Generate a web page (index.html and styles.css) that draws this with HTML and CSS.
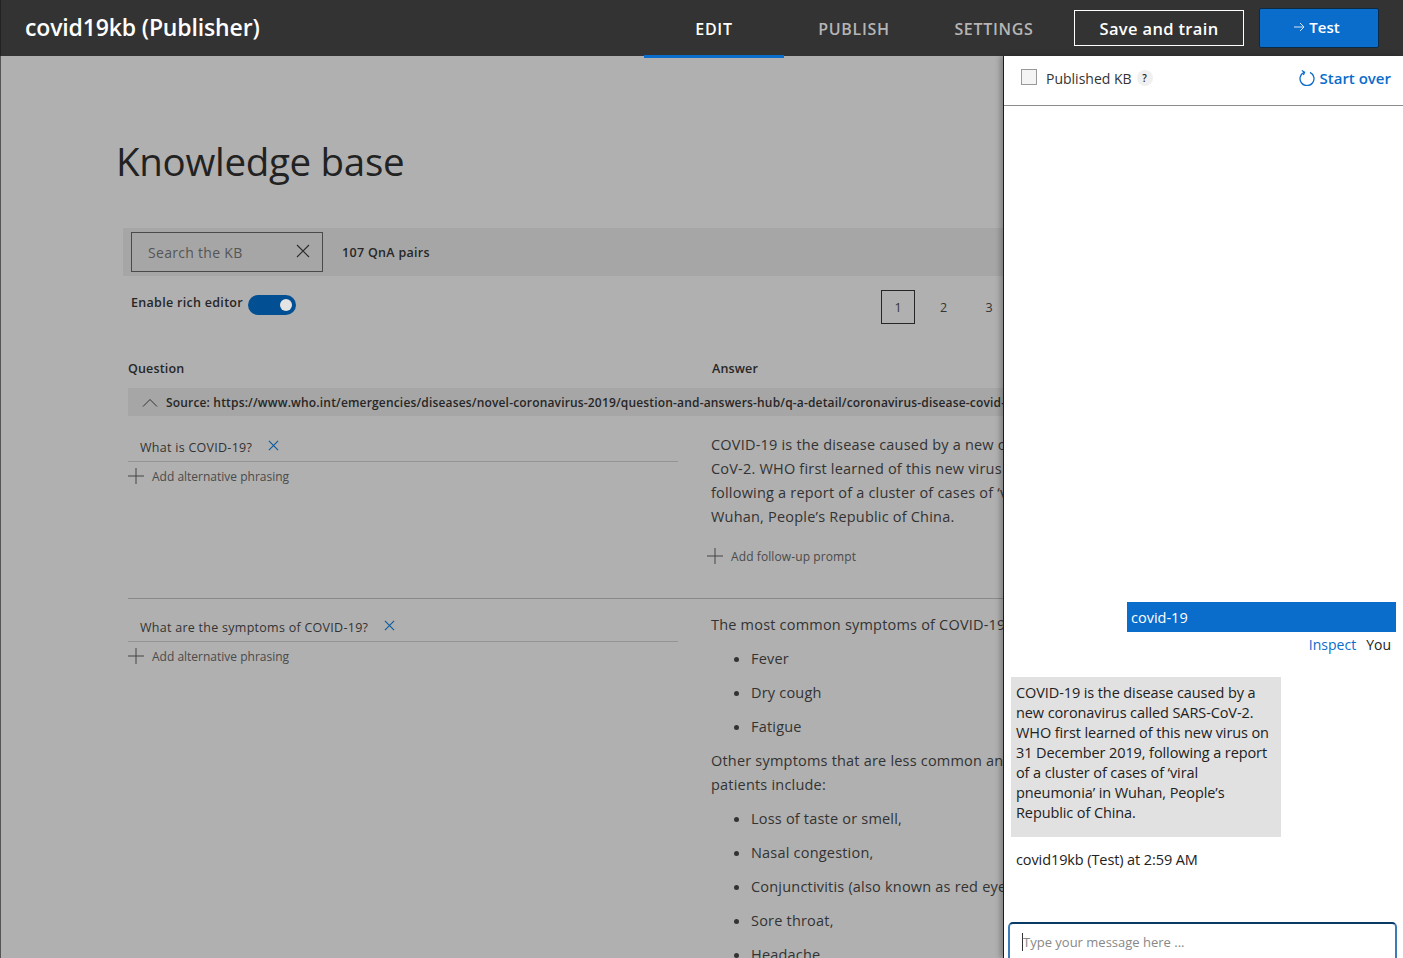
FILE: index.html
```html
<!DOCTYPE html>
<html lang="en">
<head>
	<meta charset="UTF-8">
	<title>covid19kb (Publisher)</title>
	<link rel="stylesheet" href="styles.css">
</head>
<body>
	<header class="topbar">
		<div class="brand">covid19kb (Publisher)</div>
		<nav class="tabs">
			<a class="tab tab-active">EDIT</a>
			<a class="tab">PUBLISH</a>
			<a class="tab">SETTINGS</a>
		</nav>
		<button class="btn-save">Save and train</button>
		<button class="btn-test">
			<svg class="arrow" viewBox="0 0 12 12"><path d="M1 6h10M7 2l4 4-4 4" fill="none" stroke="#d5e6f7" stroke-width="1"/></svg>
			Test
		</button>
	</header>
	<div class="page">
		<main class="kb">
			<h1 class="kb-title">Knowledge base</h1>
			<div class="toolbar">
				<div class="search">
					<span>Search the KB</span>
					<svg class="search-x" viewBox="0 0 14 14"><path d="M1 1l12 12M13 1L1 13" stroke="#2b2b2b" stroke-width="1.1"/></svg>
				</div>
				<span class="pair-count">107 QnA pairs</span>
			</div>
			<div class="editor-row">
				<div class="rich">
					<span>Enable rich editor</span>
					<span class="toggle"><i></i></span>
				</div>
				<div class="pager">
					<span class="page-num page-current">1</span>
					<span class="page-num">2</span>
					<span class="page-num">3</span>
				</div>
			</div>
			<div class="col-heads">
				<span>Question</span>
				<span>Answer</span>
			</div>
			<div class="source">
				<svg class="chevron" viewBox="0 0 16 9"><path d="M1 8.500l7-7 7 7" fill="none" stroke="#333" stroke-width="1"/></svg>
				<span>Source: https://www.who.int/emergencies/diseases/novel-coronavirus-2019/question-and-answers-hub/q-a-detail/coronavirus-disease-covid-19</span>
			</div>

			<section class="qna qna-first">
				<div class="question">
					<div class="q-line">
						<span>What is COVID-19?</span>
						<svg class="q-x" viewBox="0 0 12 12"><path d="M1 1l10 10M11 1L1 11" stroke="#0b5a9e" stroke-width="1.200"/></svg>
					</div>
					<div class="add">
						<svg class="plus" viewBox="0 0 16 16"><path d="M8 0v16M0 8h16" stroke="#444" stroke-width="1"/></svg>
						<span>Add alternative phrasing</span>
					</div>
				</div>
				<div class="answer">
					<p class="line">COVID-19 is the disease caused by a new coronavirus called SARS-</p>
					<p class="line">CoV-2. WHO first learned of this new virus on 31 December 2019,</p>
					<p class="line">following a report of a cluster of cases of ‘viral pneumonia’ in</p>
					<p class="line">Wuhan, People’s Republic of China.</p>
					<div class="add add-follow">
						<svg class="plus" viewBox="0 0 16 16"><path d="M8 0v16M0 8h16" stroke="#444" stroke-width="1"/></svg>
						<span>Add follow-up prompt</span>
					</div>
				</div>
			</section>

			<section class="qna qna-second">
				<div class="question">
					<div class="q-line">
						<span>What are the symptoms of COVID-19?</span>
						<svg class="q-x" viewBox="0 0 12 12"><path d="M1 1l10 10M11 1L1 11" stroke="#0b5a9e" stroke-width="1.200"/></svg>
					</div>
					<div class="add">
						<svg class="plus" viewBox="0 0 16 16"><path d="M8 0v16M0 8h16" stroke="#444" stroke-width="1"/></svg>
						<span>Add alternative phrasing</span>
					</div>
				</div>
				<div class="answer">
					<p class="line">The most common symptoms of COVID-19 are</p>
					<ul class="bullets">
						<li>Fever</li>
						<li>Dry cough</li>
						<li>Fatigue</li>
					</ul>
					<p class="line">Other symptoms that are less common and may affect some</p>
					<p class="line">patients include:</p>
					<ul class="bullets">
						<li>Loss of taste or smell,</li>
						<li>Nasal congestion,</li>
						<li>Conjunctivitis (also known as red eyes)</li>
						<li>Sore throat,</li>
						<li>Headache,</li>
					</ul>
				</div>
			</section>
		</main>

		<aside class="chat">
			<div class="chat-head">
				<span class="check"></span>
				<span class="published">Published KB</span>
				<span class="help">?</span>
				<a class="start-over">
					<svg class="refresh" viewBox="0 0 16 16"><path d="M5 2.300A7 7 0 1 0 11 2.300" fill="none" stroke="#0a6ccb" stroke-width="1.300"/><path d="M2.800 .6L5.600 2.200 4.400 4.900" fill="none" stroke="#0a6ccb" stroke-width="1.200"/></svg>
					Start over
				</a>
			</div>
			<div class="messages">
				<div class="msg-user">covid-19</div>
				<div class="msg-meta"><a>Inspect</a><span>You</span></div>
				<div class="msg-bot">COVID-19 is the disease caused by a new coronavirus called SARS-CoV-2. WHO first learned of this new virus on 31 December 2019, following a report of a cluster of cases of ‘viral pneumonia’ in Wuhan, People’s Republic of China.</div>
				<div class="msg-from">covid19kb (Test) at 2:59 AM</div>
			</div>
			<div class="chat-input"><i class="caret"></i><span>Type your message here ...</span></div>
		</aside>
	</div>
</body>
</html>
```

FILE: styles.css
```css
*{margin:0;padding:0;box-sizing:border-box;}
html,body{height:100%;overflow:hidden;}
body{
	font-family:"Open Sans","Noto Sans",sans-serif;
	background:#b0b0b0;
	color:#262626;
	width:1403px;
	height:958px;
}
svg{display:block;flex:none;}
ul{list-style:none;}

/* top bar */
.topbar{
	height:56px;
	background:#333;
	border-left:1px solid #222;
	display:flex;
	align-items:flex-start;
	color:#fff;
}
.brand{
	width:643px;
	padding-left:24px;
	font-size:23px;
	font-weight:600;
	line-height:54px;
	letter-spacing:-.15px;
}
.tabs{display:flex;}
.tab{
	width:140px;
	height:58px;
	line-height:58px;
	text-align:center;
	font-size:16px;
	font-weight:600;
	color:#b5b5b5;
	letter-spacing:.7px;
	position:relative;
	z-index:2;
}
.tab-active{color:#fff;border-bottom:3px solid #0a6ccb;}
.btn-save{
	margin:10px 15px 0 10px;
	width:170px;
	height:36px;
	background:transparent;
	border:1px solid #fff;
	color:#fff;
	font:600 16.500px "Open Sans",sans-serif;
	letter-spacing:.35px;
}
.btn-test{
	margin-top:8px;
	width:120px;
	height:40px;
	background:#0a6ccb;
	border:1px solid #0d2a45;
	border-radius:2px;
	color:#fff;
	font:600 15px "Open Sans",sans-serif;
	display:flex;
	align-items:center;
	justify-content:center;
	gap:4px;
	padding-bottom:2px;
	padding-right:5px;
}
.arrow{width:12px;height:12px;}

.page{display:flex;height:902px;}

/* left side, dimmed */
.kb{
	width:1003px;
	height:902px;
	overflow:hidden;
	border-left:1px solid #555;
	padding:0 0 0 122px;
}
.kb-title{
	font-size:38.500px;
	font-weight:400;
	line-height:52px;
	margin:79px 0 0 -7px;
	letter-spacing:-.3px;
	color:#222;
}
.toolbar{
	width:880px;
	height:48px;
	margin-top:41px;
	background:#a6a6a6;
	display:flex;
	align-items:center;
	padding-left:8px;
}
.search{
	width:192px;
	height:40px;
	border:1px solid #4a4a4a;
	display:flex;
	align-items:center;
	justify-content:space-between;
	padding:0 12px 0 16px;
	font-size:14px;
	letter-spacing:.3px;
	color:#555;
}
.search-x{width:14px;height:14px;margin-bottom:2px;}
.pair-count{margin-left:19px;font-size:12.500px;font-weight:600;letter-spacing:.3px;}
.editor-row{
	display:flex;
	justify-content:space-between;
	padding-left:8px;
	height:82px;
}
.rich{
	display:flex;
	align-items:flex-start;
	gap:5px;
	font-size:12.500px;
	font-weight:600;
	letter-spacing:.3px;
	margin-top:19px;
}
.rich span:first-child{line-height:15px;}
.toggle{
	width:48px;
	height:20px;
	border-radius:10px;
	background:#034f94;
	position:relative;
}
.toggle i{
	position:absolute;
	top:4px;
	right:4px;
	width:12px;
	height:12px;
	border-radius:50%;
	background:#e4e4e4;
}
.pager{display:flex;margin:14px -3px 0 0;height:34px;gap:11.500px;}
.page-num{
	width:34px;
	height:34px;
	line-height:36px;
	text-align:center;
	font-size:12.500px;
	color:#333;
}
.page-current{border:1px solid #262626;line-height:34px;}
.col-heads{
	display:grid;
	grid-template-columns:584px 1fr;
	padding-left:5px;
	height:30px;
	line-height:22px;
	font-size:12.500px;
	font-weight:600;
	letter-spacing:.15px;
}
.source{
	width:880px;
	height:28px;
	margin-left:5px;
	background:#a6a6a6;
	display:flex;
	align-items:center;
	gap:8px;
	padding-left:14px;
	font-size:12px;
	font-weight:600;
	letter-spacing:.17px;
	white-space:nowrap;
	overflow:hidden;
}
.chevron{width:16px;height:9px;}

.qna{
	display:grid;
	grid-template-columns:583px 292px;
	margin-left:5px;
}
.qna-first{
	height:182px;
	padding-top:16px;
}
.qna-second{
	padding-top:13px;
	border-top:1px solid #8a8a8a;
}
.question{width:550px;}
.q-line{
	height:30px;
	border-bottom:1px solid #949494;
	padding:3px 0 0 12px;
	display:flex;
	align-items:flex-start;
	gap:16px;
	font-size:12.500px;
	line-height:26px;
	letter-spacing:.27px;
	color:#333;
}
.q-x{width:11px;height:11px;margin-top:5px;}
.add{
	display:flex;
	align-items:center;
	gap:8px;
	height:28px;
	font-size:12px;
	color:#4a4a4a;
}
.answer{
	font-size:14.500px;
	letter-spacing:.2px;
	color:#333;
	white-space:nowrap;
	overflow:hidden;
	padding:1px 0 0 4px;
	margin-left:-4px;
}
.line{height:24px;line-height:24px;}
.add-follow{height:30px;margin:12px 0 0 -4px;letter-spacing:.1px;}
.plus{width:16px;height:16px;}
.bullets{padding:5px 0 5px 40px;}
.bullets li{height:34px;line-height:34px;position:relative;}
.bullets li::before{
	content:'';
	position:absolute;
	left:-17px;
	top:15px;
	width:5px;
	height:5px;
	border-radius:50%;
	background:#333;
}

/* test chat panel */
.chat{
	width:400px;
	height:902px;
	background:#fff;
	border-left:1px solid #1c1c1c;
	box-shadow:-3px 0 5px rgba(0,0,0,.25);
	display:flex;
	flex-direction:column;
	position:relative;
	z-index:1;
	color:#222;
}
.chat-head{
	height:50px;
	border-bottom:1px solid #8c8c8c;
	display:flex;
	align-items:center;
	padding:0 12px 6px 17px;
	font-size:14px;
}
.check{
	width:16px;
	height:16px;
	border:1px solid #999;
	background:#f4f4f4;
	margin:-2px 9px 0 0;
}
.published{color:#333;padding-top:2px;}
.help{
	width:16px;
	height:16px;
	margin-left:5px;
	border-radius:50%;
	background:#f0f0f0;
	text-align:center;
	font-size:10px;
	font-weight:600;
	line-height:16px;
}
.start-over{
	margin-left:auto;
	display:flex;
	align-items:center;
	gap:5px;
	color:#0a6ccb;
	font-weight:600;
	font-size:15px;
}
.refresh{width:16px;height:16px;}
.messages{flex:1;display:flex;flex-direction:column;padding-top:496px;}
.msg-user{
	width:269px;
	height:30px;
	margin-left:123px;
	padding-left:4px;
	background:#0a6ccb;
	color:#fff;
	line-height:31px;
	font-size:14.500px;
}
.msg-meta{
	display:flex;
	justify-content:flex-end;
	gap:10px;
	padding-right:12px;
	height:45px;
	line-height:26px;
	font-size:14px;
}
.msg-meta a{color:#0a6ccb;}
.msg-bot{
	width:270px;
	height:160px;
	margin-left:7px;
	padding:6px 5px;
	background:#e1e1e1;
	font-size:14.500px;
	line-height:20px;
	letter-spacing:-.1px;
}
.msg-from{
	padding:13px 0 0 12px;
	font-size:14.500px;
	line-height:20px;
	letter-spacing:-.1px;
}
.chat-input{
	height:36px;
	margin:0 6px 0 4px;
	border:2px solid #3b7cb8;
	border-top-color:#0a3a66;
	border-bottom:0;
	border-radius:5px 5px 0 0;
	display:flex;
	align-items:center;
	padding:2px 0 0 12px;
	font-size:13px;
	color:#888;
}
.caret{width:1px;height:18px;background:#333;}
```
